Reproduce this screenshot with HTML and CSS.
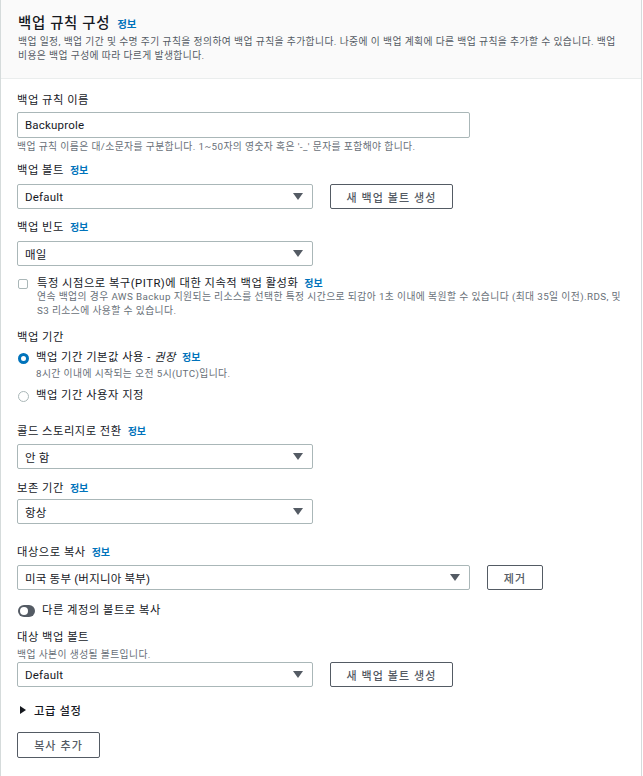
FILE: index.html
```html
<!DOCTYPE html>
<html lang="ko">
<head>
<meta charset="utf-8">
<link rel="stylesheet" href="styles.css">
</head>
<body>
<div class="panel">
  <div class="header">
    <h2 class="title">백업 규칙 구성<a class="info info-title">정보</a></h2>
    <p class="header-desc">백업 일정, 백업 기간 및 수명 주기 규칙을 정의하여 백업 규칙을 추가합니다. 나중에 이 백업 계획에 다른 백업 규칙을 추가할 수 있습니다. 백업 비용은 백업 구성에 따라 다르게 발생합니다.</p>
  </div>
  <div class="body">
    <div class="label l-name">백업 규칙 이름</div>
    <div class="input long">Backuprole</div>
    <div class="hint">백업 규칙 이름은 대/소문자를 구분합니다. 1~50자의 영숫자 혹은 '-_' 문자를 포함해야 합니다.</div>

    <div class="label l-vault">백업 볼트<a class="info">정보</a></div>
    <div class="row r-vault">
      <div class="select short"><span>Default</span><i class="caret"></i></div>
      <div class="btn btn-vault">새 백업 볼트 생성</div>
    </div>

    <div class="label l-freq">백업 빈도<a class="info">정보</a></div>
    <div class="select short s-freq"><span>매일</span><i class="caret"></i></div>

    <div class="check-row">
      <span class="checkbox"></span>
      <div class="check-text">
        <div class="label">특정 시점으로 복구(PITR)에 대한 지속적 백업 활성화<a class="info">정보</a></div>
        <div class="hint">연속 백업의 경우 AWS Backup 지원되는 리소스를 선택한 특정 시간으로 되감아 1초 이내에 복원할 수 있습니다 (최대 35일 이전).RDS, 및 S3 리소스에 사용할 수 있습니다.</div>
      </div>
    </div>

    <div class="label l-window">백업 기간</div>
    <div class="radio-row r1">
      <span class="radio on"></span>
      <div class="radio-text">
        <div class="label">백업 기간 기본값 사용 - <em>권장</em><a class="info">정보</a></div>
        <div class="hint">8시간 이내에 시작되는 오전 5시(UTC)입니다.</div>
      </div>
    </div>
    <div class="radio-row r2">
      <span class="radio"></span>
      <div class="radio-text">
        <div class="label">백업 기간 사용자 지정</div>
      </div>
    </div>

    <div class="label l-cold">콜드 스토리지로 전환<a class="info">정보</a></div>
    <div class="select short s-cold"><span>안 함</span><i class="caret"></i></div>

    <div class="label l-ret">보존 기간<a class="info">정보</a></div>
    <div class="select short s-ret"><span>항상</span><i class="caret"></i></div>

    <div class="label l-copy">대상으로 복사<a class="info">정보</a></div>
    <div class="row r-copy">
      <div class="select long"><span>미국 동부 (버지니아 북부)</span><i class="caret"></i></div>
      <div class="btn btn-remove">제거</div>
    </div>

    <div class="toggle-row">
      <span class="toggle"><span class="knob"></span></span>
      <span class="label">다른 계정의 볼트로 복사</span>
    </div>

    <div class="label l-dest">대상 백업 볼트</div>
    <div class="hint h-dest">백업 사본이 생성될 볼트입니다.</div>
    <div class="row r-dest">
      <div class="select short"><span>Default</span><i class="caret"></i></div>
      <div class="btn btn-vault">새 백업 볼트 생성</div>
    </div>

    <div class="expander"><i class="tri"></i><span>고급 설정</span></div>

    <div class="btn btn-add">복사 추가</div>
  </div>
</div>
</body>
</html>
```
FILE: styles.css
```css
* { box-sizing: border-box; }
html, body { margin: 0; padding: 0; background: #fff; }
body {
  font-family: "Roboto", "Noto Sans CJK KR", sans-serif;
  color: #16191f;
  font-size: 11.5px;
  word-break: keep-all;
}
.panel {
  width: 642px;
  height: 776px;
  border-left: 1px solid #d5dbdb;
  border-right: 1px solid #d5dbdb;
}
.header {
  background: #fafafa;
  border-bottom: 1px solid #eaeded;
  padding: 15px 13px 16px 17px;
  height: 79px;
}
.title {
  margin: 0;
  font-size: 14.4px;
  line-height: 18px;
  font-weight: 500;
  letter-spacing: 0.7px;
  display: flex;
  align-items: baseline;
}
.info {
  color: #0073bb;
  font-weight: 700;
  font-size: 10px;
  margin-left: 6px;
  letter-spacing: 0;
  font-style: normal;
}
.info-title { font-size: 10.5px; margin-left: 7px; }
.header-desc {
  margin: 1px 0 0;
  font-size: 9.8px;
  line-height: 14px;
  color: #545b64;
  letter-spacing: 0.4px;
}
.body { padding: 0 12px 0 16px; }
.label {
  font-size: 11.3px;
  line-height: 16px;
  font-weight: 400;
  letter-spacing: 0.5px;
}
.label em { font-style: italic; }
.hint {
  font-size: 9.8px;
  line-height: 14px;
  color: #687078;
  letter-spacing: 0.4px;
}
.l-name { margin-top: 14px; }
.input, .select {
  height: 25px;
  border: 1px solid #aab7b8;
  border-radius: 2px;
  background: #fff;
  padding: 0 8px 0 7px;
  display: flex;
  align-items: center;
  font-size: 11.5px;
  letter-spacing: 0.2px;
}
.input { margin-top: 3px; height: 26px; }
.long { width: 453px; }
.short { width: 296px; }
.select span { flex: 1; }
.caret {
  width: 0; height: 0;
  border-left: 5px solid transparent;
  border-right: 5px solid transparent;
  border-top: 7px solid #545b64;
  margin-right: 1px;
}
.input + .hint { margin-top: 2px; }
.l-vault { margin-top: 9px; }
.row { display: flex; gap: 17px; }
.r-vault { margin-top: 5px; }
.btn {
  height: 25px;
  border: 1px solid #545b64;
  border-radius: 2px;
  color: #545b64;
  font-weight: 500;
  font-size: 11px;
  letter-spacing: 1.1px;
  display: flex;
  align-items: center;
  justify-content: center;
  background: #fff;
}
.btn-vault { width: 123px; }
.btn-remove { width: 56px; }
.btn-add { width: 83px; margin-top: 14px; height: 26px; }
.l-freq { margin-top: 11px; }
.s-freq { margin-top: 5px; }
.check-row {
  display: flex;
  margin-top: 10px;
}
.checkbox {
  width: 10px; height: 10px;
  border: 1px solid #aab7b8;
  border-radius: 2px;
  margin-top: 3px;
  margin-right: 9px;
  margin-left: 1px;
  flex: none;
}
.check-text .hint { margin-top: -2px; }
.l-window { margin-top: 12px; }
.radio-row { display: flex; }
.r1 { margin-top: 4px; }
.r2 { margin-top: 7px; }
.radio {
  width: 11px; height: 11px;
  border-radius: 50%;
  border: 1px solid #aab7b8;
  margin-top: 3px;
  margin-right: 7px;
  margin-left: 1px;
  flex: none;
}
.radio.on { border: 3.5px solid #0073bb; }
.radio-text .hint { margin-top: 1px; }
.l-cold { margin-top: 20px; }
.s-cold { margin-top: 4px; }
.l-ret { margin-top: 12px; }
.s-ret { margin-top: 2px; }
.l-copy { margin-top: 21px; }
.r-copy { margin-top: 4px; }
.toggle-row {
  display: flex;
  align-items: center;
  margin-top: 13px;
  height: 16px;
}
.toggle {
  width: 17px; height: 12px;
  border-radius: 6px;
  background: #545b64;
  position: relative;
  margin-left: 1px;
  margin-right: 7px;
}
.knob {
  position: absolute;
  left: 2px; top: 2px;
  width: 8px; height: 8px;
  border-radius: 50%;
  background: #fff;
}
.l-dest { margin-top: 11px; }
.h-dest { margin-top: 2px; }
.r-dest { margin-top: 0; }
.expander {
  display: flex;
  align-items: center;
  margin-top: 15px;
  height: 16px;
  font-size: 11.3px;
  font-weight: 500;
  letter-spacing: 0.6px;
}
.tri {
  width: 0; height: 0;
  border-top: 4px solid transparent;
  border-bottom: 4px solid transparent;
  border-left: 6px solid #16191f;
  margin-left: 3px;
  margin-right: 8px;
}
```
